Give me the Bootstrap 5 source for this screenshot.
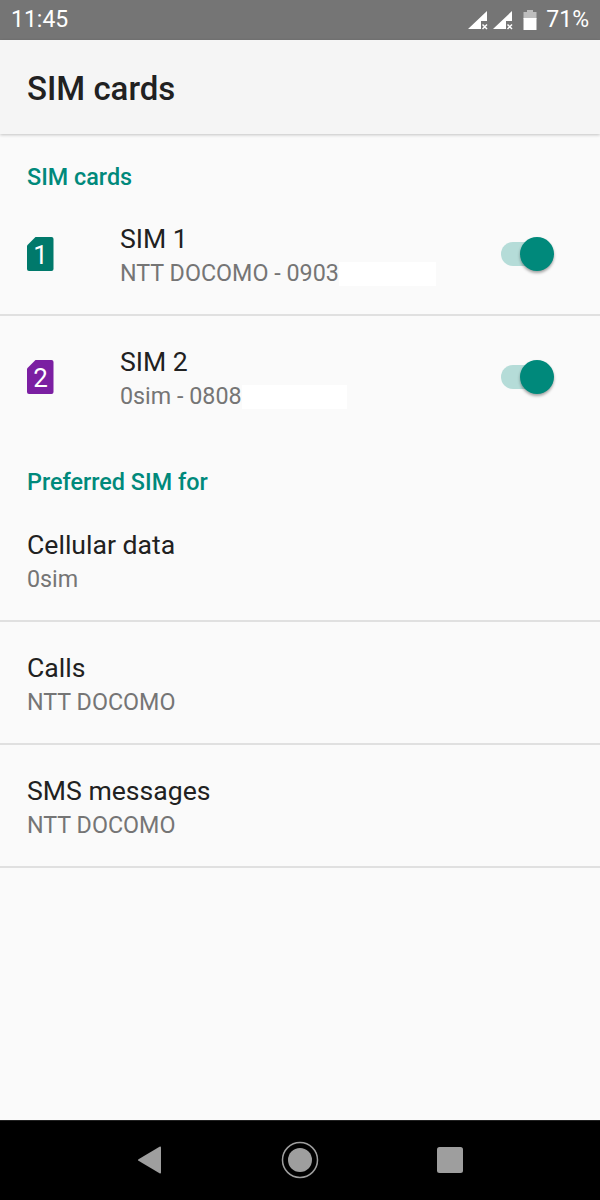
<!doctype html>
<html lang="en"><head><meta charset="utf-8">
<link href="https://cdn.jsdelivr.net/npm/bootstrap@5.3.0/dist/css/bootstrap.min.css" rel="stylesheet">
<style>
html,body{margin:0;height:1200px;overflow:hidden}
body{font-family:Roboto,"Liberation Sans",sans-serif;background:#fafafa;color:#212121}
.app{height:1200px}
.status{height:40px;background:#757575;color:#fff;font-size:23px;padding:0 11px;flex:none}
.appbar{height:94px;background:#f5f5f5;padding:3px 0 0 27px;font-size:33px;font-weight:500;box-shadow:0 1px 3px rgba(0,0,0,.22);z-index:1;color:#212121;flex:none}
.content{flex:1 1 auto}
.sect{height:59px;padding:29px 27px 0;font-size:23.4px;line-height:28px;font-weight:500;color:#00897b;margin:0}
.sect-second{height:60px}
.rowitem{height:123px;border-bottom:2px solid #e0e0e0;padding:4px 27px 0}
.rowitem.noline{border-bottom-color:transparent}
.simrow{padding-right:46px;padding-top:0}
.simicon{width:93px;flex:none;line-height:0}
.simtext{padding-top:5px}
.ttl{font-size:26.6px;line-height:34px;color:#212121}
.sub{font-size:23.3px;line-height:34px;color:#757575;white-space:nowrap}
.mask{display:inline-block;background:#fff;height:24px;vertical-align:top;margin-top:6px}
.mask1{width:97px}.mask2{width:105px}
.swt{position:relative;width:53px;height:36px;flex:none}
.swt::before{content:"";position:absolute;left:0;top:6px;width:47px;height:24px;border-radius:12px;background:#b5dcd8}
.swt::after{content:"";position:absolute;right:0;top:1px;width:34px;height:34px;border-radius:50%;background:#00897b;box-shadow:0 2px 3px rgba(0,0,0,.35)}
.navbar-bot{height:80px;background:#000;border-top:1px solid #222;flex:none;padding-bottom:1px}
.navslot{width:150px}
</style></head>
<body>
<div class="app d-flex flex-column">
  <div class="status d-flex align-items-center justify-content-between">
    <span>11:45</span>
    <span class="d-flex align-items-center">
      <svg width="25" height="20" viewBox="0 0 25 20"><path d="M0 19 L19 1 V11 H13 V19 Z" fill="#fff"/><path d="M14.500 14.500 l4.500 4.500 m0-4.500 l-4.500 4.500" stroke="#fff" stroke-width="1.500"/></svg>
      <svg width="25" height="20" viewBox="0 0 25 20"><path d="M0 19 L19 1 V11 H13 V19 Z" fill="#fff"/><path d="M14.500 14.500 l4.500 4.500 m0-4.500 l-4.500 4.500" stroke="#fff" stroke-width="1.500"/></svg>
      <svg width="16" height="22" viewBox="0 0 16 22" class="ms-1 me-2"><path d="M5 1h6v2h3.500v7H1.500V3H5z" fill="#bdbdbd"/><path d="M1.500 9h13v12h-13z" fill="#fff"/></svg>
      <span>71%</span>
    </span>
  </div>
  <div class="appbar d-flex align-items-center">SIM cards</div>
  <div class="content">
    <h2 class="sect">SIM cards</h2>
    <div class="rowitem simrow d-flex align-items-center">
      <div class="simicon"><svg width="27" height="34" viewBox="0 0 27 34"><path d="M8.500 0H24.500a2 2 0 0 1 2 2V32a2 2 0 0 1-2 2H2a2 2 0 0 1-2-2V8.500z" fill="#00796b"/><text x="13.500" y="27" text-anchor="middle" font-family="Roboto" font-size="26" fill="#fff">1</text></svg></div>
      <div class="flex-grow-1 simtext">
        <div class="ttl">SIM 1</div>
        <div class="sub">NTT DOCOMO - 0903<span class="mask mask1"></span></div>
      </div>
      <div class="swt"></div>
    </div>
    <div class="rowitem simrow noline d-flex align-items-center">
      <div class="simicon"><svg width="27" height="34" viewBox="0 0 27 34"><path d="M8.500 0H24.500a2 2 0 0 1 2 2V32a2 2 0 0 1-2 2H2a2 2 0 0 1-2-2V8.500z" fill="#7b1fa2"/><text x="13.500" y="27" text-anchor="middle" font-family="Roboto" font-size="26" fill="#fff">2</text></svg></div>
      <div class="flex-grow-1 simtext">
        <div class="ttl">SIM 2</div>
        <div class="sub">0sim - 0808<span class="mask mask2"></span></div>
      </div>
      <div class="swt"></div>
    </div>
    <h2 class="sect sect-second">Preferred SIM for</h2>
    <div class="rowitem d-flex flex-column justify-content-center"><div class="ttl">Cellular data</div><div class="sub">0sim</div></div>
    <div class="rowitem d-flex flex-column justify-content-center"><div class="ttl">Calls</div><div class="sub">NTT DOCOMO</div></div>
    <div class="rowitem d-flex flex-column justify-content-center"><div class="ttl">SMS messages</div><div class="sub">NTT DOCOMO</div></div>
  </div>
  <div class="navbar-bot d-flex align-items-center justify-content-center">
    <div class="navslot d-flex justify-content-center"><svg width="26" height="28" viewBox="0 0 26 28"><path d="M24 1.500V26.500a1 1 0 0 1-1.500.8L1.500 14.800a1 1 0 0 1 0-1.600L22.500.7A1 1 0 0 1 24 1.500z" fill="#9e9e9e"/></svg></div>
    <div class="navslot d-flex justify-content-center"><svg width="38" height="38" viewBox="0 0 38 38"><circle cx="19" cy="19" r="17.500" fill="none" stroke="#9e9e9e" stroke-width="1.500"/><circle cx="19" cy="19" r="12" fill="#9e9e9e"/></svg></div>
    <div class="navslot d-flex justify-content-center"><svg width="26" height="26" viewBox="0 0 26 26"><rect width="26" height="26" rx="2.500" fill="#9e9e9e"/></svg></div>
  </div>
</div>
<script src="https://cdn.jsdelivr.net/npm/bootstrap@5.3.0/dist/js/bootstrap.bundle.min.js"></script>
</body></html>
